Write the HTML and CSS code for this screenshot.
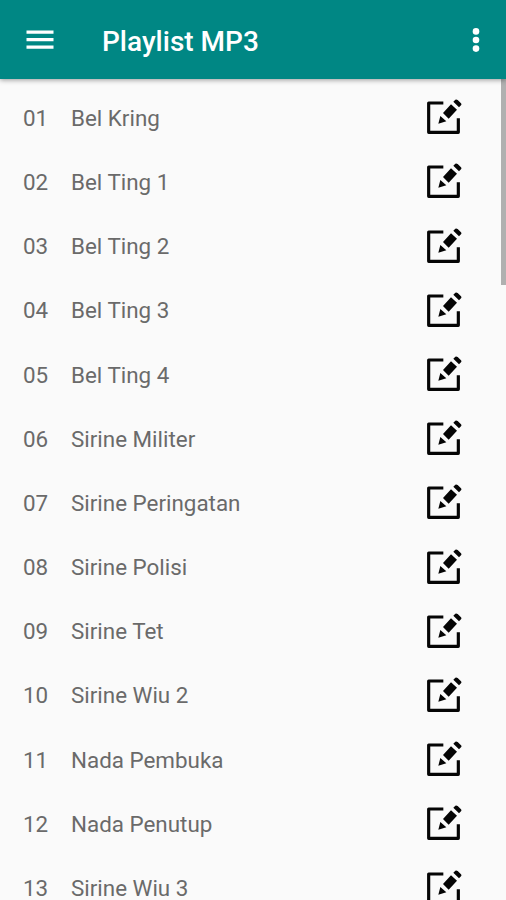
FILE: index.html
```html
<!DOCTYPE html>
<html lang="id">
<head>
<meta charset="utf-8">
<title>Playlist MP3</title>
<link rel="stylesheet" href="styles.css">
</head>
<body>
<svg class="defs" aria-hidden="true">
  <symbol id="edit" viewBox="33 27 108 108">
    <path d="M85 39H41V127H130V85" fill="none" stroke="#050505" stroke-width="9.5" stroke-linejoin="round"/>
    <path d="M70 101L76 78L94 94ZM84 69L108 43L126 59L101 86ZM115 35L121 29Q124 27 128 30L138 40Q141 43 138 46L132 52Z" fill="#050505"/>
  </symbol>
</svg>
<header class="bar">
  <svg class="menu" viewBox="0 0 28 20"><path d="M.5 2.2H27.5M.5 9.7H27.5M.5 17.2H27.5" stroke="#fff" stroke-width="3.3"/></svg>
  <h1 class="title">Playlist MP3</h1>
  <svg class="more" viewBox="0 0 8 26"><g fill="#fff"><circle cx="4" cy="4.4" r="3.3"/><circle cx="4" cy="13" r="3.3"/><circle cx="4" cy="21.6" r="3.3"/></g></svg>
</header>
<main class="content">
  <ul class="list">
    <li class="row"><span class="num">01</span><span class="name">Bel Kring</span><svg class="edit"><use href="#edit"/></svg></li>
    <li class="row"><span class="num">02</span><span class="name">Bel Ting 1</span><svg class="edit"><use href="#edit"/></svg></li>
    <li class="row"><span class="num">03</span><span class="name">Bel Ting 2</span><svg class="edit"><use href="#edit"/></svg></li>
    <li class="row"><span class="num">04</span><span class="name">Bel Ting 3</span><svg class="edit"><use href="#edit"/></svg></li>
    <li class="row"><span class="num">05</span><span class="name">Bel Ting 4</span><svg class="edit"><use href="#edit"/></svg></li>
    <li class="row"><span class="num">06</span><span class="name">Sirine Militer</span><svg class="edit"><use href="#edit"/></svg></li>
    <li class="row"><span class="num">07</span><span class="name">Sirine Peringatan</span><svg class="edit"><use href="#edit"/></svg></li>
    <li class="row"><span class="num">08</span><span class="name">Sirine Polisi</span><svg class="edit"><use href="#edit"/></svg></li>
    <li class="row"><span class="num">09</span><span class="name">Sirine Tet</span><svg class="edit"><use href="#edit"/></svg></li>
    <li class="row"><span class="num">10</span><span class="name">Sirine Wiu 2</span><svg class="edit"><use href="#edit"/></svg></li>
    <li class="row"><span class="num">11</span><span class="name">Nada Pembuka</span><svg class="edit"><use href="#edit"/></svg></li>
    <li class="row"><span class="num">12</span><span class="name">Nada Penutup</span><svg class="edit"><use href="#edit"/></svg></li>
    <li class="row"><span class="num">13</span><span class="name">Sirine Wiu 3</span><svg class="edit"><use href="#edit"/></svg></li>
  </ul>
  <div class="scrollbar"></div>
</main>
</body>
</html>
```
FILE: styles.css
```css
* { box-sizing: border-box; }
body {
  margin: 0;
  height: 900px;
  display: flex;
  flex-direction: column;
  overflow: hidden;
  background: #fafafa;
  font-family: Roboto, "Liberation Sans", sans-serif;
}
.defs { position: absolute; width: 0; height: 0; }
.bar {
  flex: none;
  height: 79px;
  display: flex;
  align-items: center;
  padding: 0 26px 0 26px;
  background: #008784;
  box-shadow: 0 1px 5px rgba(0, 0, 0, .4);
  z-index: 1;
}
.menu { width: 28px; height: 20px; margin-right: 48px; }
.title {
  margin: 4px 0 0;
  flex: 1;
  color: #fff;
  font-size: 28px;
  font-weight: 500;
  line-height: 36px;
  white-space: nowrap;
}
.more { width: 8px; height: 26px; margin-top: 1px; }
.content {
  flex: 1;
  min-height: 0;
  display: flex;
  align-items: flex-start;
  overflow: hidden;
}
.list { flex: 1; margin: 0; padding: 6.2px 0 0; list-style: none; }
.row {
  height: 64.2px;
  display: flex;
  align-items: center;
  padding: 0 39px 0 23px;
  color: #6a6a6a;
  font-size: 22.4px;
  line-height: 30px;
}
.num, .name { padding-top: 1px; }
.num { width: 48px; }
.name { flex: 1; }
.edit { width: 36px; height: 36px; }
.scrollbar { width: 5px; height: 206px; background: #b0b0b0; }
```
